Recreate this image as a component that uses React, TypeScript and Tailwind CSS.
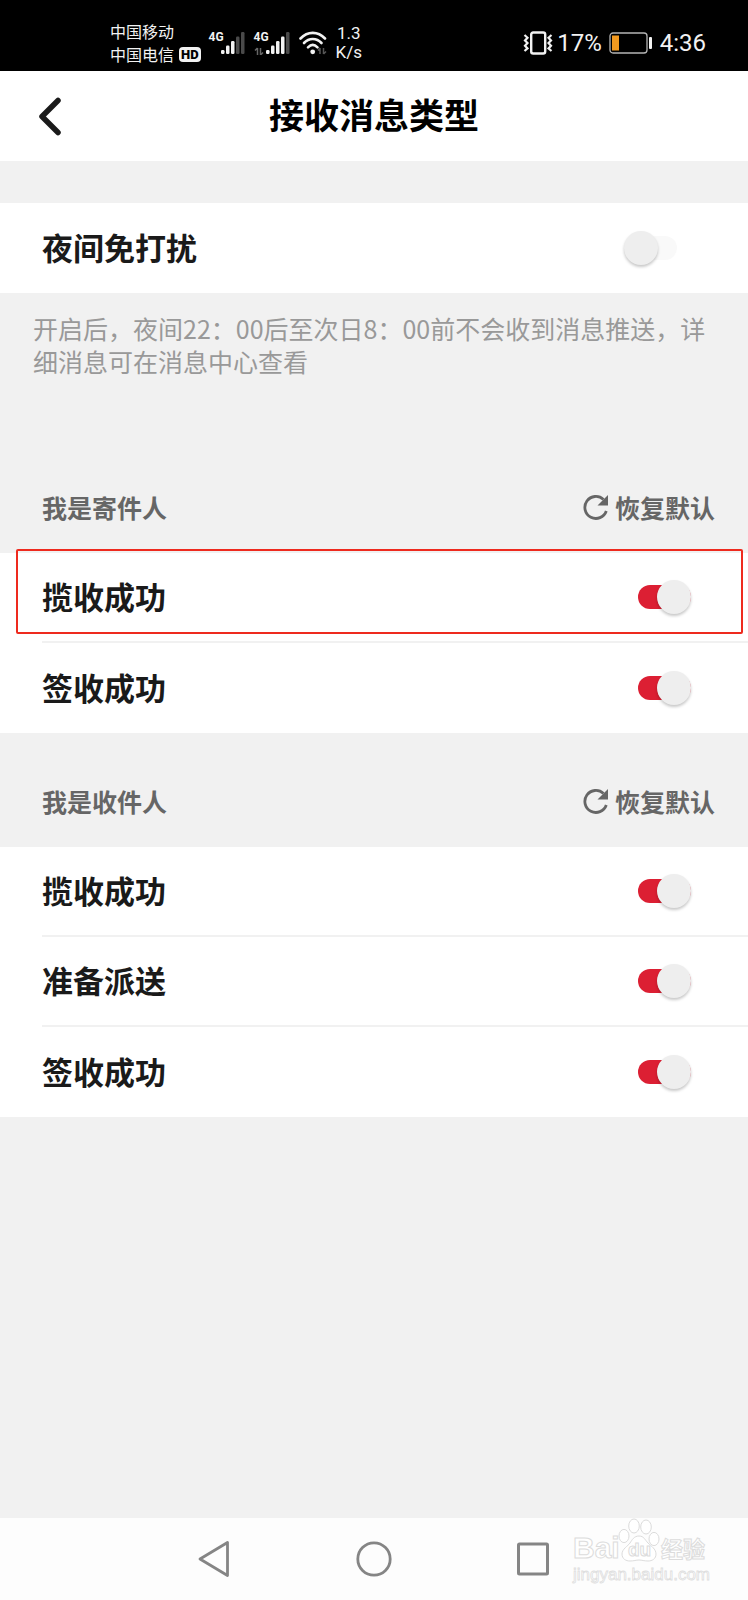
import React, { useState } from "react";
import { clsx } from "clsx";

interface NotifyOption {
  id: string;
  label: string;
}

interface NotifyGroup {
  title: string;
  options: NotifyOption[];
}

const groups: NotifyGroup[] = [
  {
    title: "我是寄件人",
    options: [
      { id: "sender-picked", label: "揽收成功" },
      { id: "sender-signed", label: "签收成功" },
    ],
  },
  {
    title: "我是收件人",
    options: [
      { id: "receiver-picked", label: "揽收成功" },
      { id: "receiver-dispatch", label: "准备派送" },
      { id: "receiver-signed", label: "签收成功" },
    ],
  },
];

const HIGHLIGHTED = "sender-picked";

const DataArrows = () => (
  <>
    <path d="M3.5 17v7M1 19.5L3.5 17" stroke="#666" strokeWidth="1.5" fill="none" />
    <path d="M6.5 17v7M9 21.5L6.5 24" stroke="#666" strokeWidth="1.5" fill="none" />
  </>
);

const Signal = ({ level, data }: { level: number; data?: boolean }) => (
  <div className="relative h-6 w-[38px]">
    <span className="absolute left-0 top-0 font-['Roboto',sans-serif] text-[12px] font-bold leading-3">
      4G
    </span>
    <svg width="38" height="24" viewBox="0 0 38 24" aria-hidden="true">
      {data && <DataArrows />}
      {[0, 1, 2, 3, 4].map((i) => (
        <rect
          key={i}
          x={12 + i * 5}
          y={19 - i * 4.5}
          width="3.5"
          height={4 + i * 4.5}
          rx="1.2"
          fill={i < level ? "#f2f2f2" : "#4a4a4a"}
        />
      ))}
    </svg>
  </div>
);

const WifiIcon = () => (
  <svg width="28" height="24" viewBox="0 0 28 24" fill="none" aria-hidden="true">
    <g stroke="#f2f2f2" strokeWidth="2.6" strokeLinecap="round">
      <path d="M1.5 7.5C8.5 0 19 0 26 7.5" />
      <path d="M5 12C10 6.6 17.5 6.6 22.5 12" />
      <path d="M9 16.3C12 13.3 15.5 13.3 18.5 16.3" />
    </g>
    <circle cx="13.7" cy="20.8" r="2.4" fill="#f2f2f2" />
    <path d="M21 17v6M19 19.5L21 17M24.5 17v6M27 20.5L24.5 23" stroke="#555" strokeWidth="1.5" />
  </svg>
);

const VibrateIcon = () => (
  <svg width="30" height="24" viewBox="0 0 30 24" fill="none" stroke="#f2f2f2" aria-hidden="true">
    <rect x="8.2" y="1.5" width="14" height="21" rx="2" strokeWidth="2.4" />
    <path d="M1.5 4l3 2.7-2.5 2.7L4.5 12l-2.5 2.7L4.5 17.4 1.5 20" strokeWidth="2.2" />
    <path d="M28.5 4l-3 2.7 2.5 2.7L25.5 12l2.5 2.7L25.5 17.4 28.5 20" strokeWidth="2.2" />
  </svg>
);

const BatteryIcon = () => (
  <svg width="44" height="22" viewBox="0 0 44 22" fill="none" aria-hidden="true">
    <rect x="1" y="1" width="37" height="20" rx="3" stroke="#b5b5b5" strokeWidth="1.3" />
    <rect x="3" y="3.5" width="7" height="15" fill="#f39a1f" />
    <rect x="40" y="5" width="3" height="12" rx="1" fill="#f2f2f2" />
  </svg>
);

const StatusBar = () => (
  <div className="flex h-[71px] items-center bg-black pl-[110px] pr-[42px] pt-[15px] text-[#f2f2f2]">
    <div className="text-[16px] leading-[23px]">
      <div>中国移动</div>
      <div className="flex items-center gap-[5px]">
        中国电信
        <span className="rounded-[4px] bg-[#f2f2f2] px-[2px] font-['Roboto',sans-serif] text-[13px] font-black leading-[15px] text-black">
          HD
        </span>
      </div>
    </div>
    <div className="ml-2 flex items-center gap-[7px]">
      <Signal level={3} />
      <Signal level={4} data />
      <WifiIcon />
    </div>
    <div className="ml-[9px] text-center font-['Roboto',sans-serif] text-[17px] leading-[19px]">
      <div>1.3</div>
      <div>K/s</div>
    </div>
    <div className="ml-auto flex items-center font-['Roboto',sans-serif] text-[24px] leading-6">
      <VibrateIcon />
      <span className="ml-1">17%</span>
      <span className="mx-[7px]">
        <BatteryIcon />
      </span>
      <span>4:36</span>
    </div>
  </div>
);

const ResetIcon = () => (
  <svg width="26" height="26" viewBox="0 0 26 26" fill="none" aria-hidden="true">
    <path d="M20.5 5.5A11 11 0 1 0 23.3 17" stroke="#666" strokeWidth="2.8" />
    <path d="M25 1v10.5H14.5z" fill="#666" />
  </svg>
);

interface SwitchRowProps {
  id: string;
  label: string;
  checked: boolean;
  onChange: () => void;
  divider?: boolean;
  highlighted?: boolean;
}

const SwitchRow: React.FC<SwitchRowProps> = ({
  id,
  label,
  checked,
  onChange,
  divider,
  highlighted,
}) => (
  <div className="relative bg-white pl-[42px]">
    <div
      className={clsx(
        "flex h-[90px] items-center justify-between",
        checked ? "pr-[57px]" : "pr-[71px]",
        divider && "border-b-2 border-[#f1f1f1]"
      )}
    >
      <label htmlFor={id} className="pb-0.5 text-[31px] font-bold leading-10 text-[#1a1a1a]">
        {label}
      </label>
      <input
        id={id}
        type="checkbox"
        role="switch"
        checked={checked}
        onChange={onChange}
        className="flex h-6 w-[53px] cursor-pointer appearance-none items-center rounded-full bg-[#f9f9f9] before:h-[34px] before:w-[34px] before:shrink-0 before:rounded-full before:bg-[#eeeeee] before:shadow-[0_2px_3px_rgba(0,0,0,0.22)] before:content-[''] checked:justify-end checked:bg-[#dc1f33]"
      />
    </div>
    {highlighted && (
      <div className="pointer-events-none absolute -top-1 left-4 right-[5px] z-10 h-[85px] rounded-[2px] border-2 border-[#ee2a1e]" />
    )}
  </div>
);

const Watermark = () => (
  <svg
    className="pointer-events-none absolute bottom-0 right-[38px]"
    width="140"
    height="84"
    viewBox="0 0 140 84"
    aria-hidden="true"
  >
    <g fill="#fff" stroke="#dcdcdc" strokeWidth="1" fontWeight="700">
      <text x="3" y="42" fontSize="30" fontFamily="Liberation Sans, sans-serif">
        Bai
      </text>
      <ellipse cx="64" cy="10" rx="5.3" ry="7" />
      <ellipse cx="76" cy="11" rx="5.3" ry="7" />
      <ellipse cx="54" cy="20" rx="5" ry="6.6" />
      <ellipse cx="84" cy="23" rx="5" ry="6.6" />
      <path d="M69 20c-5 0-7 4-9 7s-8 6-8 11 4 7 8 7 6-1 9-1 5 1 9 1 8-2 8-7-5-8-8-11-4-7-9-7z" />
      <text x="58" y="40" fontSize="19" fontFamily="Liberation Sans, sans-serif">
        du
      </text>
      <text x="91" y="41" fontSize="22" fontFamily="Noto Sans CJK SC, sans-serif">
        经验
      </text>
    </g>
    <text
      x="3"
      y="64"
      fontSize="17"
      fontFamily="Liberation Sans, sans-serif"
      fill="#fff"
      stroke="#dedede"
      strokeWidth="0.8"
    >
      jingyan.baidu.com
    </text>
  </svg>
);

const NavBar = () => (
  <nav className="relative flex h-[82px] items-center justify-between bg-[#fdfdfd] pl-[197px] pr-[198px]">
    <button type="button" aria-label="返回">
      <svg width="34" height="38" viewBox="0 0 34 38" fill="none" stroke="#858585" strokeWidth="2.8" strokeLinejoin="round">
        <path d="M30.5 2.5v33L3 19z" />
      </svg>
    </button>
    <button type="button" aria-label="主页">
      <svg width="36" height="38" viewBox="0 0 36 38" fill="none" stroke="#858585" strokeWidth="2.8">
        <circle cx="18" cy="19" r="16.2" />
      </svg>
    </button>
    <button type="button" aria-label="最近任务">
      <svg width="34" height="38" viewBox="0 0 34 38" fill="none" stroke="#858585" strokeWidth="3">
        <rect x="2.5" y="4" width="29" height="30" rx="1" />
      </svg>
    </button>
    <Watermark />
  </nav>
);

const App = () => {
  const [night, setNight] = useState(false);
  const [off, setOff] = useState<string[]>([]);

  const toggle = (id: string) =>
    setOff((prev) =>
      prev.includes(id) ? prev.filter((item) => item !== id) : [...prev, id]
    );

  const reset = (group: NotifyGroup) =>
    setOff((prev) => prev.filter((id) => !group.options.some((o) => o.id === id)));

  return (
    <div className="flex min-h-screen flex-col bg-[#f1f1f1] font-['Noto_Sans_CJK_SC',sans-serif]">
      <StatusBar />

      <header className="grid h-[90px] grid-cols-[1fr_auto_1fr] items-center bg-white">
        <button type="button" aria-label="返回上一页" className="ml-[37px] w-7 cursor-pointer">
          <svg width="26" height="40" viewBox="0 0 26 40" fill="none" stroke="#1a1a1a" strokeWidth="5.5" strokeLinecap="round" strokeLinejoin="round">
            <path d="M21 4.5L5 20.5 21 36.5" />
          </svg>
        </button>
        <h1 className="pb-1 text-[35px] font-bold leading-[50px] text-black">接收消息类型</h1>
      </header>

      <main className="flex-1 pt-[42px]">
        <SwitchRow
          id="night"
          label="夜间免打扰"
          checked={night}
          onChange={() => setNight(!night)}
        />
        <p className="px-[33px] pb-[61px] pt-[19px] text-[25px] leading-[33px] text-[#999]">
          开启后，夜间22：00后至次日8：00前不会收到消息推送，详细消息可在消息中心查看
        </p>

        {groups.map((group) => (
          <section key={group.title}>
            <div className="flex items-center justify-between pb-[25px] pl-[42px] pr-[33px] pt-[47px] text-[25px] font-bold leading-[42px] text-[#666]">
              <h2>{group.title}</h2>
              <button
                type="button"
                onClick={() => reset(group)}
                className="flex cursor-pointer items-center gap-1.5"
              >
                <ResetIcon />
                恢复默认
              </button>
            </div>
            {group.options.map((option, index) => (
              <SwitchRow
                key={option.id}
                id={option.id}
                label={option.label}
                checked={!off.includes(option.id)}
                onChange={() => toggle(option.id)}
                divider={index < group.options.length - 1}
                highlighted={option.id === HIGHLIGHTED}
              />
            ))}
          </section>
        ))}
      </main>

      <NavBar />
    </div>
  );
};

export default App;
